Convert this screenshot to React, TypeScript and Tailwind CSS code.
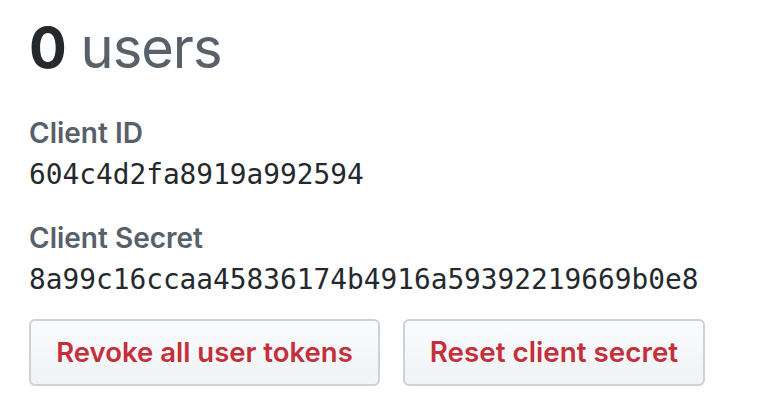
export default function App() {
  return (
    <div className="min-h-screen bg-white pl-[29px] pt-[9px] font-['Inter','Liberation_Sans',sans-serif]">
      <h2 className="text-[56px] leading-[1.4] tracking-[-1px]">
        <span className="font-bold text-[#24292e]">0</span>{" "}
        <span className="font-normal text-[#586069]">users</span>
      </h2>

      <dl className="mt-[25px]">
        <dt className="text-[28px] leading-[42px] font-semibold text-[#586069]">Client ID</dt>
        <dd className="font-['DejaVu_Sans_Mono',monospace] text-[27.8px] leading-[42px] text-[#24292e]">
          604c4d2fa8919a992594
        </dd>
        <dt className="mt-[21px] text-[28px] leading-[42px] font-semibold text-[#586069]">Client Secret</dt>
        <dd className="font-['DejaVu_Sans_Mono',monospace] text-[27.8px] leading-[42px] text-[#24292e]">
          8a99c16ccaa45836174b4916a59392219669b0e8
        </dd>
      </dl>

      <div className="mt-[18px] flex gap-[23px]">
        <button className="h-[67px] w-[351px] rounded-[6px] border-2 border-[#cfd1d4] bg-gradient-to-b from-[#fafbfc] to-[#eff3f6] text-center text-[27.5px] font-semibold text-[#c4303a]">
          Revoke all user tokens
        </button>
        <button className="h-[67px] w-[302px] rounded-[6px] border-2 border-[#cfd1d4] bg-gradient-to-b from-[#fafbfc] to-[#eff3f6] text-center text-[27.8px] font-semibold text-[#c4303a]">
          Reset client secret
        </button>
      </div>
    </div>
  );
}
